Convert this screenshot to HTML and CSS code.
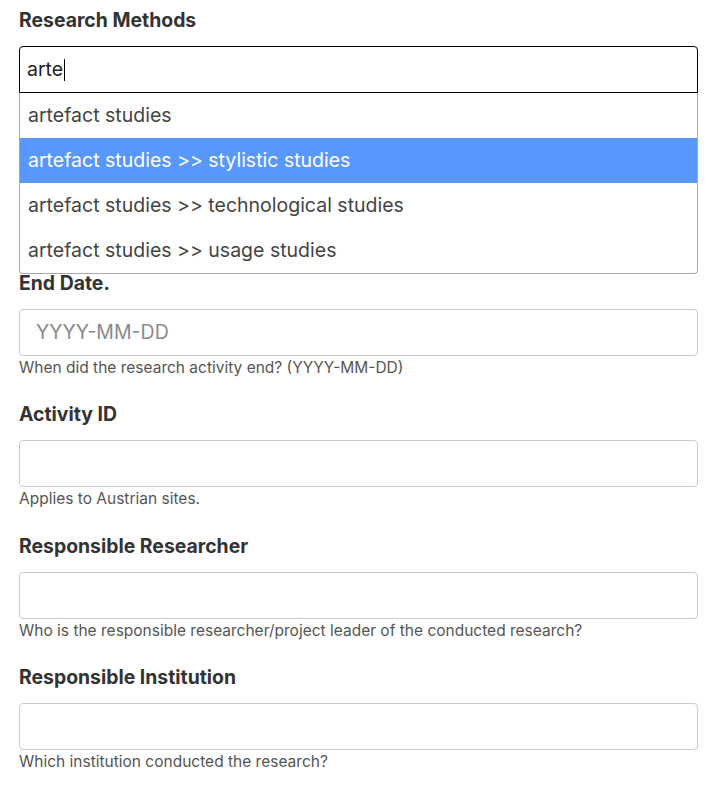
FILE: index.html
```html
<!DOCTYPE html>
<html lang="en">
<head>
<meta charset="utf-8">
<title>Research form</title>
<link rel="stylesheet" href="styles.css">
</head>
<body>
<form class="form">
  <div class="field">
    <label class="label">Research Methods</label>
    <div class="combo">
      <div class="search">arte<span class="caret"></span></div>
      <ul class="dropdown">
        <li class="option">artefact studies</li>
        <li class="option option-active">artefact studies &gt;&gt; stylistic studies</li>
        <li class="option">artefact studies &gt;&gt; technological studies</li>
        <li class="option">artefact studies &gt;&gt; usage studies</li>
      </ul>
    </div>
    <p class="help">&nbsp;</p>
  </div>
  <div class="field field-covered" aria-hidden="true">
    <div class="label">&nbsp;</div>
    <div class="input"></div>
    <p class="help">&nbsp;</p>
  </div>
  <div class="field">
    <label class="label">End Date.</label>
    <div class="input"><span class="placeholder">YYYY-MM-DD</span></div>
    <p class="help">When did the research activity end? (YYYY-MM-DD)</p>
  </div>
  <div class="field">
    <label class="label">Activity ID</label>
    <div class="input"></div>
    <p class="help">Applies to Austrian sites.</p>
  </div>
  <div class="field">
    <label class="label">Responsible Researcher</label>
    <div class="input"></div>
    <p class="help">Who is the responsible researcher/project leader of the conducted research?</p>
  </div>
  <div class="field">
    <label class="label">Responsible Institution</label>
    <div class="input"></div>
    <p class="help">Which institution conducted the research?</p>
  </div>
</form>
</body>
</html>
```

FILE: styles.css
```css
html, body {
  margin: 0;
  padding: 0;
  background: #fff;
}
body {
  font-family: Inter, "Libre Franklin", "Liberation Sans", sans-serif;
  color: #333;
}
.form {
  width: 679px;
  padding: 6px 0 0 19px;
}
.field {
  margin-bottom: 20.4px;
}
.label {
  display: block;
  font-size: 19.4px;
  font-weight: 700;
  line-height: 28px;
  color: #333;
  margin-bottom: 12px;
}
.combo {
  position: relative;
}
.search {
  box-sizing: border-box;
  height: 47px;
  border: 1px solid #000;
  border-radius: 4px 4px 0 0;
  padding: 0 7px;
  font-size: 19.5px;
  line-height: 45px;
  color: #222;
}
.caret {
  display: inline-block;
  width: 1px;
  height: 22px;
  background: #000;
  vertical-align: -5px;
  margin-left: 1px;
}
.dropdown {
  position: absolute;
  top: 100%;
  left: 0;
  right: 0;
  margin: 0;
  padding: 0;
  list-style: none;
  background: #fff;
  border: 1px solid #aaa;
  border-top: none;
  border-radius: 0 0 4px 4px;
  z-index: 5;
}
.option {
  height: 45px;
  line-height: 45px;
  padding: 0 8px;
  font-size: 19.5px;
  color: #444;
}
.option-active {
  background: #5897fb;
  color: #fff;
}
.input {
  box-sizing: border-box;
  height: 47px;
  border: 1px solid #ccc;
  border-radius: 4px;
  padding: 0 16px;
  font-size: 19.5px;
  line-height: 45px;
}
.placeholder {
  color: #8a8a8a;
}
.help {
  margin: 0;
  font-size: 15.5px;
  line-height: 24px;
  color: #555;
}
```
